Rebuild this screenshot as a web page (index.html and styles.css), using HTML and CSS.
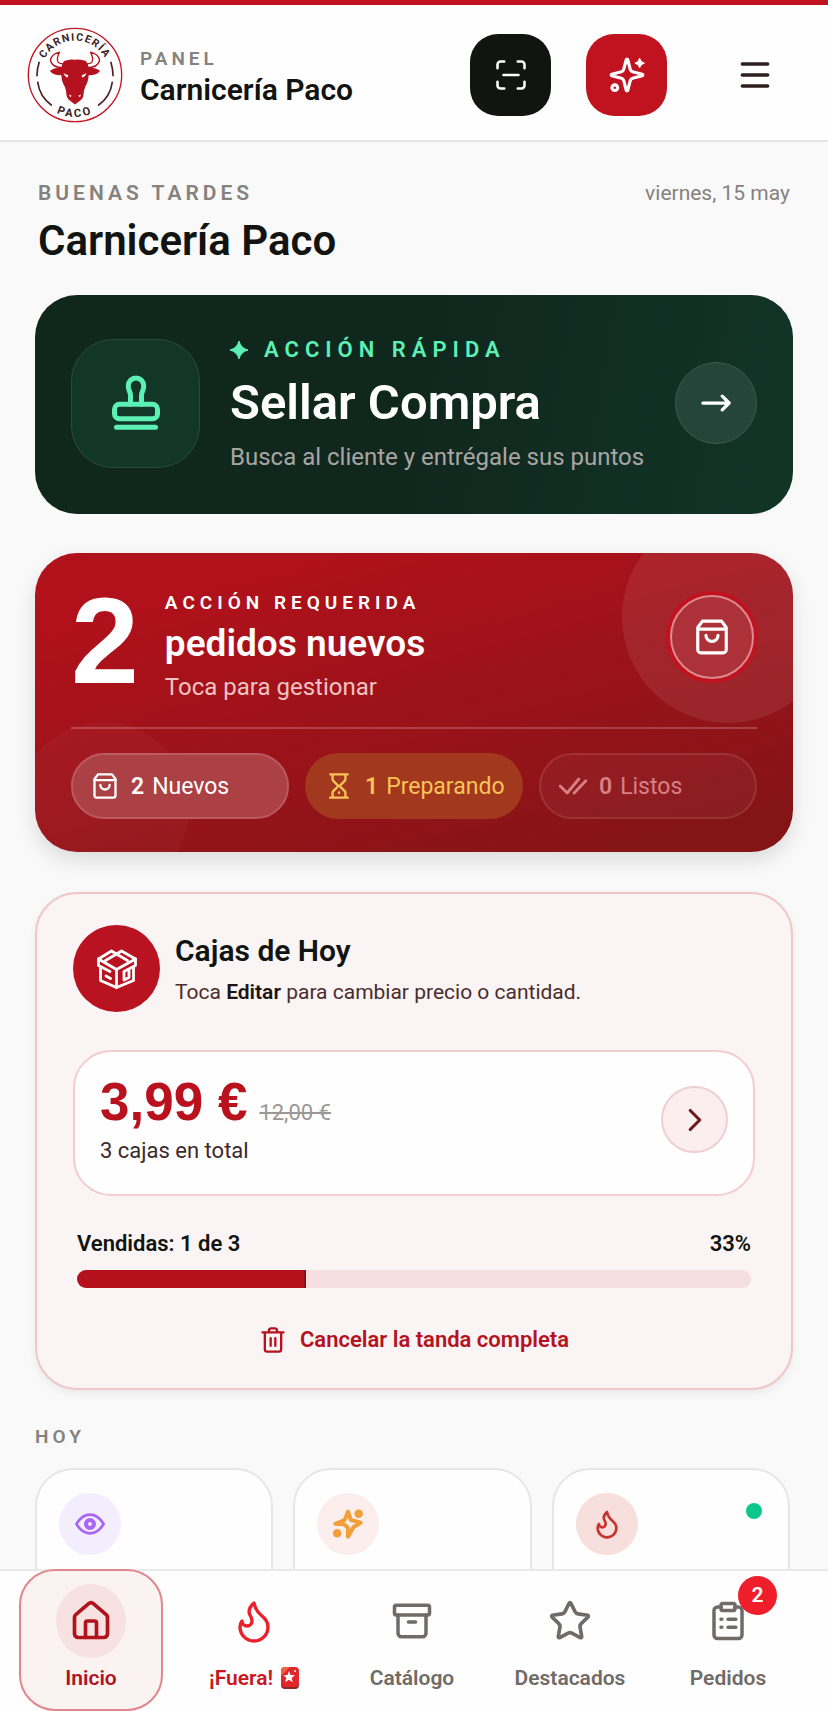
FILE: index.html
```html
<!DOCTYPE html>
<html lang="es">
  <head>
    <meta charset="UTF-8" />
    <meta name="viewport" content="width=device-width, initial-scale=1.0" />
    <title>Carnicería Paco - Panel</title>
    <link rel="stylesheet" href="styles.css">
  </head>
  <body>
    <!-- Header -->
    <header class="topbar">
      <svg class="logo" viewBox="20 35 290 290" role="img" aria-label="Carnicería Paco">
        <defs>
          <path id="arcTop" d="M61 180A104 104 0 0 1 269 180" />
          <path id="arcBottom" d="M38 180A127 127 0 0 0 292 180" />
        </defs>
        <circle cx="165" cy="180" r="141" fill="#fff" stroke="#c1121f" stroke-width="4" />
        <text class="logo-text logo-text-top"><textPath href="#arcTop" startOffset="50%">CARNICERÍA</textPath></text>
        <text class="logo-text logo-text-bottom"><textPath href="#arcBottom" startOffset="50%">PACO</textPath></text>
        <g fill="none" stroke="#4a2323" stroke-width="5">
          <path d="M57 140Q50 162 50 184M52 200Q58 246 95 272" />
          <path d="M273 140Q280 162 280 184M278 200Q272 246 235 272" />
        </g>
        <g fill="#fff" stroke="#b4121e" stroke-width="4" stroke-linejoin="round">
          <path d="M118 111Q108 132 114 141Q120 148 136 146L130 158Q96 158 91 137Q92 118 118 111Z" />
          <path d="M212 111Q222 132 216 141Q210 148 194 146L200 158Q234 158 239 137Q238 118 212 111Z" />
        </g>
        <path fill="#b4121e" d="M132 138Q148 131 165 134Q182 131 198 138Q204 146 207 159Q224 156 241 167Q232 181 206 181Q206 200 196 215Q191 228 190 245Q187 255 178 259L165 269L152 259Q143 255 140 245Q139 228 134 215Q124 200 124 181Q98 181 89 167Q106 156 123 159Q126 146 132 138Z" />
        <path fill="#fff" d="M130 175L145 181L142 188Q134 185 130 175ZM200 175L185 181L188 188Q196 185 200 175ZM147 239L155 243L150 247ZM183 239L175 243L180 247Z" />
      </svg>
      <div class="brand">
        <span class="brand-label">PANEL</span>
        <strong class="brand-name">Carnicería Paco</strong>
      </div>
      <div class="topbar-actions">
        <button class="square-btn dark" type="button" aria-label="Escanear">
          <svg class="icon" width="36" height="36" viewBox="0 0 24 24" stroke-width="1.7">
            <path d="M3 7.500V5a2 2 0 0 1 2-2h2.500M16.500 3H19a2 2 0 0 1 2 2v2.500M21 16.500V19a2 2 0 0 1-2 2h-2.500M7.500 21H5a2 2 0 0 1-2-2v-2.500M7 12h10" />
          </svg>
        </button>
        <button class="square-btn red" type="button" aria-label="Asistente">
          <svg class="icon" width="38" height="38" viewBox="0 0 24 24" stroke-width="2">
            <path d="M9.937 15.500A2 2 0 0 0 8.500 14.063l-6.135-1.582a.5.5 0 0 1 0-.962L8.500 9.936A2 2 0 0 0 9.937 8.500l1.582-6.135a.5.5 0 0 1 .963 0L14.063 8.500A2 2 0 0 0 15.500 9.937l6.135 1.581a.5.5 0 0 1 0 .964L15.500 14.063a2 2 0 0 0-1.437 1.437l-1.582 6.135a.5.5 0 0 1-.963 0z" />
            <path d="M20 1.500l1 2 2 1-2 1-1 2-1-2-2-1 2-1z" fill="currentColor" stroke-width="0.600" />
            <circle cx="4.300" cy="20" r="1.800" />
          </svg>
        </button>
        <button class="menu-btn" type="button" aria-label="Menú">
          <svg class="icon" width="32" height="32" viewBox="0 0 24 24" stroke-width="2.600">
            <path d="M2.500 3.750h19M2.500 12h19M2.500 20.250h19" />
          </svg>
        </button>
      </div>
    </header>

    <!-- Main content -->
    <main class="main">
      <div class="greeting">
        <div>
          <p class="greeting-label">BUENAS TARDES</p>
          <h1>Carnicería Paco</h1>
        </div>
        <time class="date" datetime="05-15">viernes, 15 may</time>
      </div>

      <a class="stamp-card" href="#sellar">
        <span class="stamp-icon">
          <svg class="icon" width="60" height="60" viewBox="0 0 24 24" stroke-width="2">
            <path d="M14.200 12.500V9c0-1.500.9-2 .9-3.900a3.100 3.100 0 0 0-6.200 0C8.900 7 9.800 7.500 9.800 9v3.500" />
            <rect x="3.400" y="12.500" width="17.200" height="5.800" rx="2" />
            <path d="M4.200 21.700h15.600" />
          </svg>
        </span>
        <span class="stamp-text">
          <span class="stamp-label">
            <svg width="18" height="18" viewBox="0 0 18 18" fill="currentColor" aria-hidden="true"><path d="M9 0q1.800 7.200 9 9-7.200 1.800-9 9-1.800-7.200-9-9 7.200-1.800 9-9z" stroke="currentColor" /></svg>
            ACCIÓN RÁPIDA
          </span>
          <strong class="stamp-title">Sellar Compra</strong>
          <span class="stamp-sub">Busca al cliente y entrégale sus puntos</span>
        </span>
        <span class="stamp-arrow">
          <svg class="icon" width="30" height="30" viewBox="0 0 24 24" stroke-width="2.600">
            <path d="M1.500 12h20.500M17 6.500l5.500 5.500-5.500 5.500" />
          </svg>
        </span>
      </a>

      <section class="orders-card">
        <div class="orders-top">
          <span class="orders-count">2</span>
          <div class="orders-text">
            <p class="orders-label">ACCIÓN REQUERIDA</p>
            <h2>pedidos nuevos</h2>
            <p class="orders-sub">Toca para gestionar</p>
          </div>
          <button class="orders-btn" type="button" aria-label="Gestionar pedidos">
            <svg class="icon" width="38" height="38" viewBox="0 0 24 24">
              <path d="M6 2 3 6v14a2 2 0 0 0 2 2h14a2 2 0 0 0 2-2V6l-3-4Z" />
              <path d="M3.500 7h17M15.800 11a3.800 3.800 0 0 1-7.600 0" />
            </svg>
          </button>
        </div>
        <div class="chips">
          <a class="chip chip-new" href="#nuevos">
            <svg class="icon" width="28" height="28" viewBox="0 0 24 24">
              <path d="M6 2 3 6v14a2 2 0 0 0 2 2h14a2 2 0 0 0 2-2V6l-3-4Z" />
              <path d="M3 7h18M16 11a4 4 0 0 1-8 0" />
            </svg>
            <b>2</b> Nuevos
          </a>
          <a class="chip chip-prep" href="#preparando">
            <svg class="icon" width="28" height="28" viewBox="0 0 24 24">
              <path d="M4.500 22h15M4.500 2h15M17.500 22v-4.200a2 2 0 0 0-.6-1.400L12.500 12l4.400-4.400a2 2 0 0 0 .6-1.400V2M6.500 2v4.200a2 2 0 0 0 .6 1.400L11.500 12l-4.400 4.400a2 2 0 0 0-.6 1.400V22M12 17.500v.5" />
            </svg>
            <b>1</b> Preparando
          </a>
          <a class="chip chip-ready" href="#listos">
            <svg class="icon" width="28" height="28" viewBox="0 0 24 24" stroke-width="2.400">
              <path d="M1 12l6 6L17 6M13 18 23 7.500" />
            </svg>
            <b>0</b> Listos
          </a>
        </div>
      </section>

      <section class="boxes-card">
        <div class="boxes-head">
          <span class="boxes-icon">
            <svg class="icon" width="40" height="40" viewBox="0 0 40 40" stroke-width="2.800">
              <path d="M1.500 10 14.500 2l5 3 5-3 14 8-19 10.500z" />
              <path d="M8.500 11.500 19.500 5l11 6.500" />
              <path d="M1.500 10v6.500l11.500 6M38.500 10v6.500l-11.500 6M19.500 20.500v18" />
              <path d="M3.500 18v13.500l16 7M36.500 18v13.500l-17 7M9 27l4.500 2.500M27 23v8l5-2.500v-8" />
            </svg>
          </span>
          <div class="boxes-text">
            <h2>Cajas de Hoy</h2>
            <p>Toca <b>Editar</b> para cambiar precio o cantidad.</p>
          </div>
        </div>

        <a class="price-box" href="#editar">
          <span class="price-text">
            <span class="price-line"><strong>3,99 €</strong> <s>12,00 €</s></span>
            <span class="price-total">3 cajas en total</span>
          </span>
          <span class="price-arrow">
            <svg class="icon" width="38" height="38" viewBox="0 0 24 24"><path d="m9 18 6-6-6-6" /></svg>
          </span>
        </a>

        <div class="sold">
          <div class="sold-line"><span>Vendidas: 1 de 3</span><span>33%</span></div>
          <div class="bar" role="progressbar" aria-label="Vendidas" aria-valuenow="33" aria-valuemin="0" aria-valuemax="100">
            <div class="bar-fill" style="width: 34%"></div>
          </div>
        </div>

        <button class="cancel-btn" type="button">
          <svg class="icon" width="28" height="28" viewBox="0 0 24 24">
            <path d="M3 5.500h18M19 5.500V20a2 2 0 0 1-2 2H7a2 2 0 0 1-2-2V5.500M8.500 5V4a2 2 0 0 1 2-2h3a2 2 0 0 1 2 2v1M10 10.500v6.500M14 10.500v6.500" />
          </svg>
          Cancelar la tanda completa
        </button>
      </section>

      <h3 class="section-title">HOY</h3>
      <div class="stats">
        <div class="stat">
          <span class="stat-icon purple">
            <svg class="icon" width="32" height="32" viewBox="0 0 24 24">
              <path d="M1.800 12Q6 5 12 5T22.200 12Q18 19 12 19T1.800 12Z" />
              <circle cx="12" cy="12" r="3" stroke-width="3" />
            </svg>
          </span>
        </div>
        <div class="stat">
          <span class="stat-icon orange">
            <svg class="icon" width="32" height="32" viewBox="0 0 24 24" stroke-width="3">
              <path d="M12 2.800 14.200 9l7.300 2-5.300 3.200L12 21.500v-6.700l-3-2.600-6.500-.4L9.500 9z" />
              <circle cx="20" cy="4.300" r="1.700" />
              <circle cx="3.800" cy="19" r="1.700" />
            </svg>
          </span>
        </div>
        <div class="stat">
          <span class="stat-icon rose">
            <svg class="icon" width="32" height="32" viewBox="0 0 24 24">
              <path d="M8.500 14.500A2.500 2.500 0 0 0 11 12c0-1.380-.5-2-1-3-1.072-2.143-.224-4.054 2-6 .5 2.500 2 4.900 4 6.500 2 1.600 3 3.500 3 5.500a7 7 0 1 1-14 0c0-1.153.433-2.294 1-3a2.500 2.500 0 0 0 2.500 2.500z" />
            </svg>
          </span>
          <span class="dot"></span>
        </div>
      </div>
    </main>

    <!-- Bottom navigation -->
    <nav class="nav">
      <a class="nav-item active" href="#inicio">
        <span class="nav-icon">
          <svg class="icon" width="44" height="44" viewBox="0 0 24 24">
            <path d="M15 21v-8a1 1 0 0 0-1-1h-4a1 1 0 0 0-1 1v8" />
            <path d="M3 10a2 2 0 0 1 .709-1.528l7-5.999a2 2 0 0 1 2.582 0l7 5.999A2 2 0 0 1 21 10v9a2 2 0 0 1-2 2H5a2 2 0 0 1-2-2z" />
          </svg>
        </span>
        Inicio
      </a>
      <a class="nav-item hot" href="#fuera">
        <span class="nav-icon">
          <svg class="icon" width="48" height="48" viewBox="0 0 24 24" stroke-width="1.700">
            <path d="M8.500 14.500A2.500 2.500 0 0 0 11 12c0-1.380-.5-2-1-3-1.072-2.143-.224-4.054 2-6 .5 2.500 2 4.900 4 6.500 2 1.600 3 3.500 3 5.500a7 7 0 1 1-14 0c0-1.153.433-2.294 1-3a2.500 2.500 0 0 0 2.500 2.500z" />
          </svg>
        </span>
        <span class="nav-label">¡Fuera!
          <svg width="18" height="22" viewBox="0 0 18 22" aria-hidden="true">
            <rect y="2" width="18" height="20" rx="4" fill="#8e2a22" />
            <rect width="18" height="20" rx="4" fill="#e3262c" />
            <path d="M4 0h5L0 9V4a4 4 0 0 1 4-4z" fill="#e8653f" />
            <path d="M8 4l1.600 4 4.400.2-3.400 2.800 1.200 4.200L8 12.800l-3.800 2.400 1.200-4.200L2.500 8.200l4-.2z" fill="#fff" />
            <circle cx="14" cy="4" r="1" fill="#fff" />
          </svg>
        </span>
      </a>
      <a class="nav-item" href="#catalogo">
        <span class="nav-icon">
          <svg class="icon" width="42" height="42" viewBox="0 0 24 24" stroke-width="2">
            <rect x="2" y="3" width="20" height="5.500" rx="1" />
            <path d="M4 8.500V19a2 2 0 0 0 2 2h12a2 2 0 0 0 2-2V8.500M10 12.500h4" />
          </svg>
        </span>
        Catálogo
      </a>
      <a class="nav-item" href="#destacados">
        <span class="nav-icon">
          <svg class="icon" width="44" height="44" viewBox="0 0 24 24" stroke-width="2">
            <path d="M11.525 2.295a.53.53 0 0 1 .95 0l2.310 4.679a2.123 2.123 0 0 0 1.595 1.160l5.166.756a.53.53 0 0 1 .294.904l-3.736 3.638a2.123 2.123 0 0 0-.611 1.878l.882 5.140a.53.53 0 0 1-.771.560l-4.618-2.428a2.122 2.122 0 0 0-1.973 0L6.396 21.010a.53.53 0 0 1-.770-.560l.881-5.139a2.122 2.122 0 0 0-.611-1.879L2.160 9.795a.53.53 0 0 1 .294-.906l5.165-.755a2.122 2.122 0 0 0 1.597-1.160z" />
          </svg>
        </span>
        Destacados
      </a>
      <a class="nav-item" href="#pedidos">
        <span class="nav-icon">
          <svg class="icon" width="42" height="42" viewBox="0 0 24 24">
            <rect x="8" y="2" width="8" height="4" rx="1" />
            <path d="M16 4h2a2 2 0 0 1 2 2v14a2 2 0 0 1-2 2H6a2 2 0 0 1-2-2V6a2 2 0 0 1 2-2h2M12 11h4.500M12 15.500h4.500M8 11h.5M8 15.500h.5" />
          </svg>
          <span class="badge">2</span>
        </span>
        Pedidos
      </a>
    </nav>
  </body>
</html>
```

FILE: styles.css
```css
* {
  box-sizing: border-box;
}
body {
  margin: 0;
  height: 100vh;
  display: flex;
  flex-direction: column;
  background-color: #f9f9f9;
  color: #111411;
  font-family: Roboto, "Liberation Sans", sans-serif;
}
h1,
h2,
h3,
p {
  margin: 0;
}
a {
  color: inherit;
  text-decoration: none;
}
button {
  border: none;
  padding: 0;
  font-family: inherit;
  cursor: pointer;
}
.icon {
  fill: none;
  stroke: currentColor;
  stroke-linecap: round;
  stroke-linejoin: round;
  flex-shrink: 0;
}
.icon:not([stroke-width]) {
  stroke-width: 2;
}

/* Header */
.topbar {
  display: flex;
  align-items: center;
  flex-shrink: 0;
  padding: 22px 33px 17px 27px;
  background-color: #fefefe;
  border-top: 5px solid #c1121f;
  border-bottom: 2px solid #e6e6e6;
}
.logo {
  width: 96px;
  height: 96px;
  margin-right: 17px;
}
.logo-text {
  font-weight: bold;
  fill: #3b2424;
  text-anchor: middle;
}
.logo-text-top {
  font-size: 32px;
  letter-spacing: 4px;
}
.logo-text-bottom {
  font-size: 34px;
  letter-spacing: 7px;
}
.brand {
  display: flex;
  flex-direction: column;
  padding-top: 6px;
}
.brand-label {
  color: #85817e;
  font-size: 19px;
  font-weight: 600;
  line-height: 24px;
  letter-spacing: 4px;
}
.brand-name {
  font-size: 30px;
  font-weight: 600;
  line-height: 38px;
}
.topbar-actions {
  display: flex;
  align-items: center;
  gap: 35px;
  margin-left: auto;
}
.square-btn,
.menu-btn {
  display: flex;
  align-items: center;
  justify-content: center;
  width: 81px;
  height: 82px;
  border-radius: 28px;
  color: white;
}
.dark {
  background-color: #111411;
}
.red {
  background-color: #c1121f;
}
.menu-btn {
  margin-left: 12px;
  background-color: transparent;
  color: #2e1f1f;
}

/* Main */
.main {
  flex: 1;
  min-height: 0;
  overflow: hidden;
  padding: 38px 35px 0;
}
.greeting {
  display: flex;
  justify-content: space-between;
  padding: 0 3px;
}
.greeting-label {
  color: #85817e;
  font-size: 21px;
  font-weight: 600;
  line-height: 26px;
  letter-spacing: 4px;
}
.greeting h1 {
  margin-top: 10px;
  font-size: 42px;
  font-weight: 600;
  line-height: 50px;
}
.date {
  color: #85817e;
  font-size: 21px;
  line-height: 26px;
}

/* Stamp card */
.stamp-card {
  display: flex;
  align-items: center;
  margin-top: 29px;
  padding: 39px 36px 42px;
  border-radius: 42px;
  background: linear-gradient(100deg, #10271e 50%, #123528);
  color: white;
}
.stamp-icon {
  display: flex;
  align-items: center;
  justify-content: center;
  width: 129px;
  height: 129px;
  border: 1px solid #2a4a3c;
  border-radius: 42px;
  background-color: #123627;
  color: #5cf0b5;
}
.stamp-text {
  display: flex;
  flex: 1;
  flex-direction: column;
  gap: 9px;
  margin-left: 30px;
  padding-top: 2px;
}
.stamp-label {
  display: flex;
  align-items: center;
  gap: 16px;
  color: #5cf0b5;
  font-size: 22px;
  font-weight: 600;
  line-height: 28px;
  letter-spacing: 6px;
}
.stamp-title {
  font-size: 49px;
  font-weight: 600;
  line-height: 60px;
}
.stamp-sub {
  color: #a9a5a3;
  font-size: 24px;
  line-height: 30px;
}
.stamp-arrow {
  display: flex;
  align-items: center;
  justify-content: center;
  width: 82px;
  height: 82px;
  border: 1px solid #40584d;
  border-radius: 50%;
  background-color: #26453a;
}

/* Orders card */
.orders-card {
  position: relative;
  margin-top: 39px;
  padding: 38px 36px 33px;
  border-radius: 42px;
  overflow: hidden;
  background: linear-gradient(165deg, #b1111b 15%, #851417 90%);
  box-shadow: 0 8px 20px rgba(0, 0, 0, 0.12);
  color: white;
}
.orders-card::before,
.orders-card::after {
  content: "";
  position: absolute;
  border-radius: 50%;
}
.orders-card::before {
  top: -42px;
  right: -41px;
  width: 212px;
  height: 212px;
  background-color: rgba(255, 255, 255, 0.08);
}
.orders-card::after {
  bottom: -42px;
  left: -18px;
  width: 172px;
  height: 172px;
  background-color: rgba(255, 255, 255, 0.03);
}
.orders-top,
.chips {
  position: relative;
  z-index: 1;
}
.orders-top {
  display: flex;
  align-items: flex-start;
  padding-bottom: 26px;
  border-bottom: 2px solid rgba(255, 255, 255, 0.2);
}
.orders-count {
  font-family: "Liberation Sans", Arial, sans-serif;
  font-size: 122px;
  font-weight: bold;
  line-height: 100px;
}
.orders-text {
  flex: 1;
  margin-left: 26px;
}
.orders-label {
  font-size: 19px;
  font-weight: 600;
  line-height: 24px;
  letter-spacing: 5px;
}
.orders-text h2 {
  margin: 7px 0;
  font-size: 37px;
  font-weight: 600;
  line-height: 44px;
}
.orders-sub {
  color: #f0c3c5;
  font-size: 24px;
  line-height: 28px;
}
.orders-btn {
  display: flex;
  align-items: center;
  justify-content: center;
  width: 84px;
  height: 84px;
  margin: 4px 3px 0 0;
  border: 2px solid #dc8a90;
  border-radius: 50%;
  background-color: #ad3138;
  box-shadow: 0 0 0 4px #c1121f;
  color: white;
}
.chips {
  display: grid;
  grid-template-columns: repeat(3, minmax(0, 1fr));
  gap: 16px;
  padding-top: 24px;
}
.chip {
  display: flex;
  align-items: center;
  gap: 8px;
  height: 66px;
  padding: 0 18px;
  border: 2px solid transparent;
  border-radius: 33px;
  font-size: 23px;
  white-space: nowrap;
}
.chip .icon {
  margin-right: 4px;
}
.chip b {
  font-weight: 600;
}
.chip-new {
  border-color: #bb5a5f;
  background-color: #ab4045;
}
.chip-prep {
  background-color: #a2381e;
  color: #fbc356;
}
.chip-ready {
  border-color: rgba(255, 255, 255, 0.1);
  background-color: rgba(255, 255, 255, 0.04);
  color: #d97f86;
}

/* Boxes card */
.boxes-card {
  margin-top: 40px;
  padding: 31px 36px 33px;
  border: 2px solid #f0c6c8;
  border-radius: 42px;
  background-color: #faf4f4;
  box-shadow: 0 4px 8px rgba(0, 0, 0, 0.06);
}
.boxes-head {
  display: flex;
  align-items: center;
  gap: 15px;
}
.boxes-icon {
  display: flex;
  align-items: center;
  justify-content: center;
  width: 87px;
  height: 87px;
  border-radius: 50%;
  background-color: #b91220;
  color: white;
}
.boxes-text h2 {
  font-size: 30px;
  font-weight: 600;
  line-height: 38px;
}
.boxes-text p {
  margin-top: 8px;
  color: #4a2c2c;
  font-size: 21px;
  line-height: 28px;
}
.boxes-text b {
  color: #1c1414;
  font-weight: 600;
}
.price-box {
  display: flex;
  align-items: center;
  justify-content: space-between;
  margin-top: 38px;
  padding: 22px 25px 29px;
  border: 2px solid #f2ccce;
  border-radius: 38px;
  background-color: #fefefe;
}
.price-text {
  display: flex;
  flex-direction: column;
  gap: 7px;
}
.price-line {
  display: flex;
  align-items: baseline;
  gap: 12px;
  height: 56px;
  line-height: 56px;
}
.price-line strong {
  color: #b9121e;
  font-family: "Liberation Sans", Arial, sans-serif;
  font-size: 53px;
}
.price-line s {
  color: #9b9794;
  font-size: 22px;
}
.price-total {
  color: #3a2a2a;
  font-size: 22px;
  line-height: 28px;
}
.price-arrow {
  display: flex;
  align-items: center;
  justify-content: center;
  width: 67px;
  height: 67px;
  border: 2px solid #f0cfd1;
  border-radius: 50%;
  background-color: #faeeee;
  color: #701a20;
}
.sold {
  margin-top: 34px;
  padding: 0 4px;
}
.sold-line {
  display: flex;
  justify-content: space-between;
  font-size: 22px;
  font-weight: 600;
  line-height: 28px;
}
.bar {
  height: 18px;
  margin-top: 12px;
  border-radius: 9px;
  background-color: #f5dfdf;
}
.bar-fill {
  height: 100%;
  border-right: 2px solid #8c1019;
  border-radius: 9px 0 0 9px;
  background-color: #b5111c;
}
.cancel-btn {
  display: flex;
  align-items: center;
  gap: 13px;
  margin: 37px auto 0;
  background: none;
  color: #b5121e;
  font-size: 22px;
  font-weight: 600;
  line-height: 30px;
}

/* Today */
.section-title {
  margin-top: 35px;
  color: #85817e;
  font-size: 19px;
  font-weight: 600;
  line-height: 24px;
  letter-spacing: 4px;
}
.stats {
  display: grid;
  grid-template-columns: repeat(3, 1fr);
  gap: 20px;
  margin: 19px 3px 0 0;
}
.stat {
  display: flex;
  justify-content: space-between;
  min-height: 180px;
  padding: 23px 26px 23px 22px;
  border: 2px solid #e6e6e6;
  border-radius: 38px;
  background-color: #fefefe;
}
.stat-icon {
  display: flex;
  align-items: center;
  justify-content: center;
  width: 62px;
  height: 62px;
  border-radius: 50%;
}
.purple {
  background-color: #f3edfe;
  color: #a766f5;
}
.orange {
  background-color: #fbeeed;
  color: #f29f38;
}
.rose {
  background-color: #f6dfdd;
  color: #c8322f;
}
.dot {
  width: 16px;
  height: 16px;
  margin-top: 10px;
  border-radius: 50%;
  background-color: #0bc88a;
}

/* Bottom navigation */
.nav {
  display: grid;
  grid-template-columns: 156px repeat(4, 1fr);
  flex-shrink: 0;
  padding: 0 21px 0 19px;
  border-top: 2px solid #e9e9e9;
  background-color: #fefefe;
}
.nav-item {
  display: flex;
  flex-direction: column;
  align-items: center;
  gap: 6px;
  margin-top: -2px;
  padding: 13px 0 17px;
  border: 2px solid transparent;
  border-radius: 36px;
  color: #706b67;
  font-size: 21px;
  font-weight: 600;
  line-height: 28px;
}
.active {
  margin-right: 12px;
  border-color: #e0868c;
  background-color: #fbf2f2;
  color: #b0121e;
}
.nav-icon {
  position: relative;
  display: flex;
  align-items: center;
  justify-content: center;
  width: 70px;
  height: 74px;
}
.active .nav-icon {
  border-radius: 50%;
  background-color: #f8e2e1;
}
.hot {
  color: #c8171f;
}
.hot .icon {
  color: #ee1f2b;
}
.nav-label {
  display: flex;
  align-items: center;
  gap: 8px;
  white-space: nowrap;
}
.badge {
  position: absolute;
  top: -8px;
  right: -14px;
  width: 39px;
  height: 39px;
  border-radius: 50%;
  background-color: #ee1f2b;
  color: white;
  font-size: 21px;
  line-height: 39px;
  text-align: center;
}
```
